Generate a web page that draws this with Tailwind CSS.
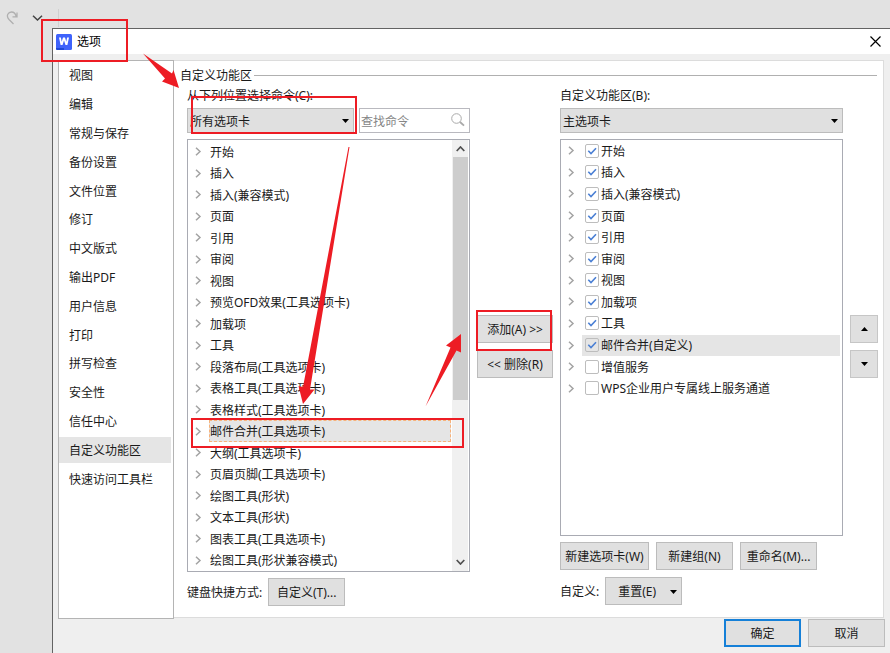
<!DOCTYPE html>
<html lang="zh-CN">
<head>
    <meta charset="UTF-8">
    <meta name="viewport" content="width=device-width, initial-scale=1.0">
    <title>选项</title>
    <script src="https://cdn.jsdelivr.net/npm/@tailwindcss/browser@4"></script>
</head>
<body class="relative flex min-h-screen flex-col bg-[#e2e2e2] font-['Noto_Sans','Noto_Sans_CJK_SC',sans-serif] text-xs text-[#1a1a1a]">

    <!-- App toolbar behind the dialog -->
    <div class="flex h-7 items-center pt-2 pl-[6px]">
        <button type="button" aria-label="重做" class="mr-[14px]">
            <svg class="h-4 w-3" viewBox="0 0 12 16" fill="none" stroke="#b0b0b0" stroke-width="1.3"><path d="M7.500 14 3 9.500C-.5 5.500 2.500 2 5.500 2c2.500 0 4 1.500 4.700 4.500M11 2.500v4.300H6.500"/></svg>
        </button>
        <button type="button" aria-label="更多" class="mr-[15px]">
            <svg class="h-[6px] w-[11px]" viewBox="0 0 11 6" fill="none" stroke="#444" stroke-width="1.5"><path d="M1 .7 5.500 5 10 .7"/></svg>
        </button>
        <div class="h-[18px] w-px bg-[#d0d0d0]"></div>
    </div>

    <!-- Dialog -->
    <div role="dialog" aria-label="选项" class="ml-[52px] flex flex-1 flex-col border-t border-l border-[#636363] bg-[#efefef]">
        <header class="flex h-[25px] items-center bg-white pr-[9px] pl-[3px]">
            <svg class="h-4 w-4" viewBox="0 0 16 16">
                <rect width="16" height="16" rx="1.500" fill="#3f63fb"/>
                <path d="M0 14h8v2H1.500A1.500 1.500 0 0 1 0 14.500z" fill="#1f48d6"/>
                <path d="M3 3.500h1.900l.8 4.200L7 3.500h2l1.300 4.200.8-4.200H13L11.400 11H9.500L8 6.600 6.500 11H4.600z" fill="#fff"/>
            </svg>
            <h1 class="ml-[5px] flex-1 text-black">选项</h1>
            <button type="button" aria-label="关闭">
                <svg class="h-[11px] w-[11px]" viewBox="0 0 11 11" stroke="#000" stroke-width="1.200"><path d="M.5.5l10 10M10.500.5l-10 10"/></svg>
            </button>
        </header>

        <div class="flex flex-1 pt-[6px] pr-[6px] pl-[5px]">
            <nav class="w-[116px] border border-[#b4b4b4] bg-white">
                <ul id="nav" class="grid h-[432px] auto-rows-fr pr-[2px]"></ul>
            </nav>

            <main class="mb-px flex flex-1 flex-col border-t border-r border-b border-[#dcdcdc] bg-white pt-1 pr-[5px] pl-[6px]">
                <h2 class="flex h-[21px] items-center leading-5 after:mr-px after:ml-[2px] after:h-px after:flex-1 after:bg-[#b0b0b0]">自定义功能区</h2>

                <div class="flex gap-[7px] pb-[9px] pl-[7px]">
                    <!-- Available commands -->
                    <section class="flex flex-1 flex-col">
                        <label for="source" class="h-[22px] leading-5">从下列位置选择命令(C):</label>
                        <div class="flex gap-[5px]">
                            <div class="relative flex-1">
                                <select id="source" class="h-[25px] w-full appearance-none border border-[#bcbcbc] bg-[#e0e0e0] pt-[2px] pl-[2px]">
                                    <option>所有选项卡</option>
                                </select>
                                <svg class="pointer-events-none absolute top-[11px] right-[5px] h-1 w-[7px]" viewBox="0 0 7 4"><path d="M0 0h7L3.500 4z"/></svg>
                            </div>
                            <div class="relative w-[111px]">
                                <input id="search" type="text" placeholder="查找命令" aria-label="查找命令" class="h-[25px] w-full border border-[#b9b9bf] bg-white pt-[2px] pl-px placeholder:text-[#858585]">
                                <svg class="pointer-events-none absolute top-[5px] right-[5px] h-[14px] w-[14px]" viewBox="0 0 14 14" fill="none" stroke="#aaa"><circle cx="5.500" cy="5.500" r="4.800"/><path d="M9 9l4 3.700" stroke-width="1.800"/></svg>
                            </div>
                        </div>
                        <div class="mt-[6px] flex h-[433px] border border-[#a9abb3]">
                            <ul id="commands" class="grid flex-1 auto-rows-fr pt-px"></ul>
                            <div class="mr-px flex w-4 flex-col items-center bg-[#f0f0f0] text-[#505050]">
                                <svg class="mt-[6px] h-[6px] w-[9px]" viewBox="0 0 9 6" fill="none" stroke="currentColor" stroke-width="1.700"><path d="M.7 5 4.500 1l3.800 4"/></svg>
                                <div class="mt-[5px] h-[243px] w-[15px] bg-[#cdcdcd]"></div>
                                <svg class="mt-auto mb-[6px] h-[6px] w-[9px]" viewBox="0 0 9 6" fill="none" stroke="currentColor" stroke-width="1.700"><path d="M.7 1 4.500 5 8.300 1"/></svg>
                            </div>
                        </div>
                        <div class="mt-[6px] flex items-center gap-[6px]">
                            <span class="pt-[2px]">键盘快捷方式:</span>
                            <button type="button" class="h-7 w-[77px] border border-[#bcbcbc] bg-[#e0e0e0] pt-[2px]">自定义(T)...</button>
                        </div>
                    </section>

                    <div class="flex w-[76px] flex-col gap-[7px] self-center">
                        <button type="button" class="h-7 border border-[#bcbcbc] bg-[#e0e0e0] pt-[2px]">添加(A) &gt;&gt;</button>
                        <button type="button" class="h-7 border border-[#bcbcbc] bg-[#e0e0e0] pt-[2px]">&lt;&lt; 删除(R)</button>
                    </div>

                    <!-- Ribbon tabs -->
                    <section class="flex flex-1 flex-col">
                        <label for="target" class="h-[22px] leading-5">自定义功能区(B):</label>
                        <div class="relative">
                            <select id="target" class="h-[25px] w-full appearance-none border border-[#bcbcbc] bg-[#e0e0e0] pt-[2px] pl-[2px]">
                                <option>主选项卡</option>
                            </select>
                            <svg class="pointer-events-none absolute top-[11px] right-[5px] h-1 w-[7px]" viewBox="0 0 7 4"><path d="M0 0h7L3.500 4z"/></svg>
                        </div>
                        <div class="mt-[6px] h-[397px] border border-[#a9abb3]">
                            <ul id="tabs" class="grid h-[259px] auto-rows-fr"></ul>
                        </div>
                        <div class="mt-[6px] flex gap-[7px]">
                            <button type="button" class="h-7 w-[89px] border border-[#bcbcbc] bg-[#e0e0e0] pt-[2px]">新建选项卡(W)</button>
                            <button type="button" class="h-7 w-[77px] border border-[#bcbcbc] bg-[#e0e0e0] pt-[2px]">新建组(N)</button>
                            <button type="button" class="h-7 w-[77px] border border-[#bcbcbc] bg-[#e0e0e0] pt-[2px]">重命名(M)...</button>
                        </div>
                        <div class="mt-[7px] flex items-center gap-[6px]">
                            <span class="pt-[2px]">自定义:</span>
                            <button type="button" class="flex h-7 w-[77px] items-center justify-between border border-[#bcbcbc] bg-[#e0e0e0] pt-[2px] pr-1 pl-3">
                                重置(E)
                                <svg class="h-1 w-[7px]" viewBox="0 0 7 4"><path d="M0 0h7L3.500 4z"/></svg>
                            </button>
                        </div>
                    </section>

                    <div class="flex w-7 flex-col gap-[7px] self-center">
                        <button type="button" aria-label="上移" class="flex h-7 items-center justify-center border border-[#c6c6c6] bg-[#e0e0e0]">
                            <svg class="h-1 w-[7px]" viewBox="0 0 7 4"><path d="M0 4h7L3.500 0z"/></svg>
                        </button>
                        <button type="button" aria-label="下移" class="flex h-7 items-center justify-center border border-[#c6c6c6] bg-[#e0e0e0]">
                            <svg class="h-1 w-[7px]" viewBox="0 0 7 4"><path d="M0 0h7L3.500 4z"/></svg>
                        </button>
                    </div>
                </div>
            </main>
        </div>

        <footer class="flex justify-end gap-[7px] pr-[5px] pb-[6px]">
            <button type="submit" class="h-7 w-[77px] border-2 border-[#1580d8] bg-[#e0e0e0] pt-[2px]">确定</button>
            <button type="button" class="h-7 w-[77px] border border-[#bcbcbc] bg-[#e0e0e0] pt-[2px]">取消</button>
        </footer>
    </div>

    <!-- Step markers -->
    <svg class="pointer-events-none absolute top-0 left-0 h-[653px] w-[890px]" viewBox="0 0 890 653" fill="#ed1c24">
        <g fill="none" stroke="#ed1c24" stroke-width="2">
            <rect x="42" y="20" width="85" height="41"/>
            <rect x="192" y="97" width="164" height="36"/>
            <rect x="192" y="419" width="271" height="28"/>
            <rect x="477" y="311" width="74" height="39"/>
        </g>
        <path d="M143 53.500 172 73.500 173.500 70 179 88 162 81.500 165 78.500z"/>
        <path d="M348.500 147 349.500 147 310 389.500 314.500 389.500 303 404 298.500 386 303 387z"/>
        <path d="M425.500 406.500 450.500 347.500 446 345.500 461 334 461 352.500 456.500 350.500z"/>
    </svg>

    <script>
        const pages = ['视图', '编辑', '常规与保存', '备份设置', '文件位置', '修订', '中文版式', '输出PDF', '用户信息', '打印', '拼写检查', '安全性', '信任中心', '自定义功能区', '快速访问工具栏'];
        const commands = ['开始', '插入', '插入(兼容模式)', '页面', '引用', '审阅', '视图', '预览OFD效果(工具选项卡)', '加载项', '工具', '段落布局(工具选项卡)', '表格工具(工具选项卡)', '表格样式(工具选项卡)', '邮件合并(工具选项卡)', '大纲(工具选项卡)', '页眉页脚(工具选项卡)', '绘图工具(形状)', '文本工具(形状)', '图表工具(工具选项卡)', '绘图工具(形状兼容模式)'];
        const tabs = ['开始', '插入', '插入(兼容模式)', '页面', '引用', '审阅', '视图', '加载项', '工具', '邮件合并(自定义)', '增值服务', 'WPS企业用户专属线上服务通道'];
        const unchecked = ['增值服务', 'WPS企业用户专属线上服务通道'];

        const expander = `
            <button type="button" aria-label="展开" class="mr-[7px] ml-[6px]">
                <svg class="h-[9px] w-2" viewBox="0 0 8 9" fill="none" stroke="#a3a3a3" stroke-width="1.500"><path d="M2 .7 6 4.500 2 8.300"/></svg>
            </button>`;

        document.getElementById('nav').innerHTML = pages.map(name => `
            <li class="flex items-center">
                <a href="#" class="h-[26px] flex-1 pl-[10px] leading-7 ${name === '自定义功能区' ? 'bg-[#e5e5e5]' : ''}">${name}</a>
            </li>`).join('');

        document.getElementById('commands').innerHTML = commands.map(name => `
            <li class="flex items-center">
                ${expander}
                <span class="mr-px h-[22px] flex-1 border border-dashed leading-[21px] ${name === '邮件合并(工具选项卡)' ? 'border-[#f7b27a] bg-[#e5e5e5]' : 'border-transparent'}">${name}</span>
            </li>`).join('');

        document.getElementById('tabs').innerHTML = tabs.map(name => `
            <li class="flex items-center pr-[2px]">
                ${expander}
                <label class="flex h-[21px] flex-1 items-center gap-[2px] pl-[3px] ${name === '邮件合并(自定义)' ? 'bg-[#e5e5e5]' : ''}">
                    <span class="grid">
                        <input type="checkbox" class="peer col-start-1 row-start-1 h-[14px] w-[14px] appearance-none rounded-xs border border-[#bdbdbd]" ${unchecked.includes(name) ? '' : 'checked'}>
                        <svg class="pointer-events-none invisible col-start-1 row-start-1 h-[14px] w-[14px] peer-checked:visible" viewBox="0 0 14 14" fill="none" stroke="#4a7fd4" stroke-width="1.600"><path d="M3.300 6.800 6 9.500 11 4.300"/></svg>
                    </span>
                    <span class="pt-[2px]">${name}</span>
                </label>
            </li>`).join('');
    </script>

</body>
</html>
